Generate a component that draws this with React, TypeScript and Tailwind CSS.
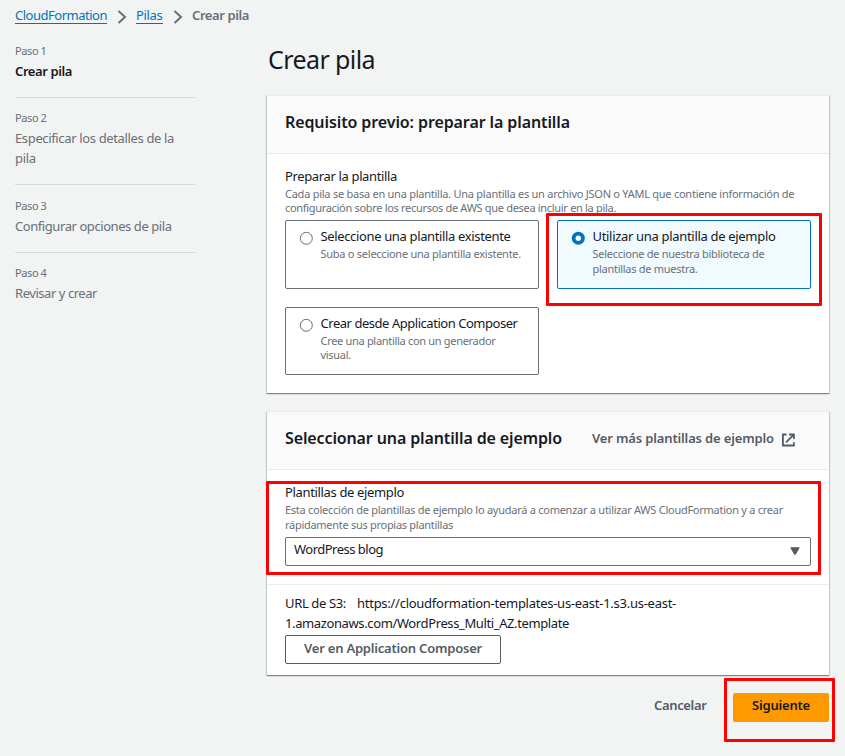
import type { ReactNode } from "react";

function Chevron() {
  return (
    <svg width="10" height="14" viewBox="0 0 10 14" fill="none" stroke="#687078" strokeWidth="2" className="mt-[3px] shrink-0">
      <path d="M1.5 1 8 7 1.5 13" />
    </svg>
  );
}

function Radio({ checked = false }: { checked?: boolean }) {
  return (
    <svg width="14" height="14" viewBox="0 0 14 14" className="mt-[10px] shrink-0">
      {checked ? (
        <>
          <circle cx="7.3" cy="7.2" r="6.5" fill="#0073bb" />
          <circle cx="7.3" cy="7.2" r="2.7" fill="#fff" />
        </>
      ) : (
        <circle cx="7.3" cy="7.3" r="6" fill="#fff" stroke="#687078" strokeWidth="1" />
      )}
    </svg>
  );
}

function Step({ n, children }: { n: ReactNode; children: ReactNode }) {
  return (
    <li className="border-b border-[#d5dbdb] pt-[10px] pb-4 last:border-b-0">
      <div className="text-[11px] leading-5 tracking-[-0.4px] text-[#687078]">{n}</div>
      {children}
    </li>
  );
}

function Tile({ title, checked = false, children }: { title: ReactNode; checked?: boolean; children: ReactNode }) {
  return (
    <div
      className={
        checked
          ? "flex gap-[7.5px] rounded-[2px] border border-[#0073bb] bg-[#f1faff] pl-[13px]"
          : "flex gap-[7.5px] rounded-[2px] border border-[#687078] bg-white pl-[13px]"
      }
    >
      <Radio checked={checked} />
      <div className="pt-[5px] whitespace-nowrap">
        <div className="text-[13px] leading-5">{title}</div>
        <div className="text-[11px] text-[#687078]">{children}</div>
      </div>
    </div>
  );
}

function Card({ header, children }: { header: ReactNode; children: ReactNode }) {
  return (
    <section className="border-t border-[#eaeded] bg-white shadow-[0_1px_1px_0_rgba(0,28,36,0.3),1px_1px_1px_0_rgba(0,28,36,0.15),-1px_1px_1px_0_rgba(0,28,36,0.15)]">
      <header className="flex h-[58px] items-center border-b border-[#eaeded] bg-[#fafafa] px-[18px] pb-[5px] whitespace-nowrap">
        {header}
      </header>
      {children}
    </section>
  );
}

export default function App() {
  return (
    <div className="relative h-[756px] w-[845px] overflow-hidden bg-[#f2f3f3] font-['Noto_Sans','Open_Sans',sans-serif] text-[13px] text-[#16191f]">
      <nav className="flex h-[31px] items-center pl-[15px] whitespace-nowrap">
        <a className="h-4 w-[92px] border-b border-[#0073bb] leading-[15px] tracking-[-0.489px] text-[#0073bb]">CloudFormation</a>
        <span className="flex w-[29px] justify-center"><Chevron /></span>
        <a className="h-4 w-[27px] border-b border-[#0073bb] leading-[15px] tracking-[-0.319px] text-[#0073bb]">Pilas</a>
        <span className="flex w-[29px] justify-center"><Chevron /></span>
        <span className="pb-[2px] font-semibold leading-[16px] tracking-[-0.401px] text-[#687078]">Crear pila</span>
      </nav>

      <div className="flex">
        <ol className="ml-[15px] w-[180px] shrink-0 leading-5 whitespace-nowrap text-[#687078]">
          <Step n="Paso 1">
            <div className="font-semibold tracking-[-0.401px] text-[#16191f]">Crear pila</div>
          </Step>
          <Step n="Paso 2">
            <div className="tracking-[-0.354px]">Especificar los detalles de la</div>
            <div className="tracking-[-0.354px]">pila</div>
          </Step>
          <Step n={<span className="block pt-px">Paso 3</span>}>
            <div className="tracking-[-0.43px]">Configurar opciones de pila</div>
          </Step>
          <Step n="Paso 4">
            <div className="tracking-[-0.449px]">Revisar y crear</div>
          </Step>
        </ol>

        <main className="ml-[72px] w-[562px] shrink-0">
          <h1 className="flex h-16 items-start pt-[13px] pl-px text-[25px] leading-[30px] tracking-[-0.588px]">Crear pila</h1>

          <Card header={<h2 className="text-base font-semibold tracking-[-0.098px]">Requisito previo: preparar la plantilla</h2>}>
            <div className="px-[18px] pt-3 pb-[18px]">
              <div className="leading-5 tracking-[-0.357px]">Preparar la plantilla</div>
              <div className="mt-px text-[11px] leading-[14px] whitespace-nowrap text-[#687078]">
                <div className="tracking-[-0.25px]">Cada pila se basa en una plantilla. Una plantilla es un archivo JSON o YAML que contiene información de</div>
                <div className="tracking-[-0.311px]">configuración sobre los recursos de AWS que desea incluir en la pila.</div>
              </div>
              <div className="mt-[5px] grid grid-cols-2 grid-rows-[69px_68px] gap-[18px]">
                <Tile title={<span className="tracking-[-0.355px]">Seleccione una plantilla existente</span>}>
                  <div className="leading-[15px] tracking-[-0.257px]">Suba o seleccione una plantilla existente.</div>
                </Tile>
                <Tile checked title={<span className="tracking-[-0.314px]">Utilizar una plantilla de ejemplo</span>}>
                  <div className="leading-[15px] tracking-[-0.274px]">Seleccione de nuestra biblioteca de</div>
                  <div className="leading-[15px] tracking-[-0.28px]">plantillas de muestra.</div>
                </Tile>
                <Tile title={<span className="tracking-[-0.464px]">Crear desde Application Composer</span>}>
                  <div className="pt-px leading-[14px] tracking-[-0.307px]">Cree una plantilla con un generador</div>
                  <div className="leading-[14px] tracking-[-0.307px]">visual.</div>
                </Tile>
              </div>
            </div>
          </Card>

          <div className="h-[18px]" />

          <Card
            header={
              <>
                <h2 className="w-[307px] text-base font-semibold tracking-[-0.122px]">Seleccionar una plantilla de ejemplo</h2>
                <a className="w-[189px] pt-[2px] font-semibold tracking-[-0.145px] text-[#545b64]">Ver más plantillas de ejemplo</a>
                <svg width="14" height="14" viewBox="0 0 14 14" fill="none" stroke="#545b64" strokeWidth="1.8" className="mt-[3px] shrink-0">
                  <path d="M5.5 1.5H1.9v11h11V9.2M8 1.5h4.9V6M12.6 1.8 5 9.4" />
                </svg>
              </>
            }
          >
            <div className="h-[115px] border-b border-[#eaeded] px-[18px] pt-3">
              <div className="leading-5 tracking-[-0.347px]">Plantillas de ejemplo</div>
              <div className="text-[11px] leading-[15px] whitespace-nowrap text-[#687078]">
                <div className="tracking-[-0.26px]">Esta colección de plantillas de ejemplo lo ayudará a comenzar a utilizar AWS CloudFormation y a crear</div>
                <div className="tracking-[-0.285px]">rápidamente sus propias plantillas</div>
              </div>
              <div className="mt-[5px] flex h-[29px] items-center justify-between rounded-[2px] border border-[#687078] pr-[10px] pl-2">
                <span className="pb-[3px] tracking-[-0.511px]">WordPress blog</span>
                <svg width="10" height="8" viewBox="0 0 10 8" fill="#545b64" stroke="#545b64" strokeLinejoin="round" className="mb-px"><path d="M0.8 0.8h8.4L5.4 7.3H4.6z" /></svg>
              </div>
            </div>
            <div className="h-[90px] px-[18px] pt-2 leading-5 whitespace-nowrap">
              <div className="flex">
                <span className="w-[72px] tracking-[-0.355px]">URL de S3:</span>
                <span className="tracking-[-0.264px]">https://cloudformation-templates-us-east-1.s3.us-east-</span>
              </div>
              <div className="tracking-[-0.381px]">1.amazonaws.com/WordPress_Multi_AZ.template</div>
              <button className="mt-[2px] flex h-[29px] w-[216px] items-center justify-center rounded-[2px] border border-[#545b64] pb-[3px] font-semibold tracking-[-0.208px] text-[#545b64]">
                Ver en Application Composer
              </button>
            </div>
          </Card>

          <div className="mt-[18px] flex h-[29px] items-center justify-end gap-[26.5px] font-semibold">
            <button className="pb-[3px] tracking-[-0.344px] text-[#545b64]">Cancelar</button>
            <button className="h-[29px] w-24 rounded-[2px] bg-[#ff9900] pb-[3px] tracking-[-0.191px]">Siguiente</button>
          </div>
        </main>
      </div>

      <div className="absolute top-[213px] left-[546px] h-[93px] w-[276px] rounded-[1px] border-3 border-[#ff0000]" />
      <div className="absolute top-[481px] left-[266px] h-[94px] w-[555px] rounded-[1px] border-3 border-[#ff0000]" />
      <div className="absolute top-[678px] left-[724px] h-[64px] w-[111px] rounded-[1px] border-3 border-[#ff0000]" />
    </div>
  );
}
